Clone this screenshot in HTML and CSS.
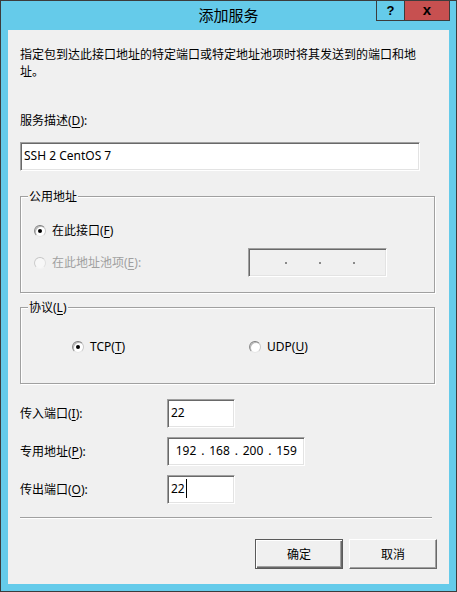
FILE: index.html
```html
<!DOCTYPE html>
<html lang="zh-CN">
<head>
<meta charset="utf-8">
<title>添加服务</title>
<link rel="stylesheet" href="styles.css">
</head>
<body>
<div class="window">
  <div class="titlebar">
    <div></div>
    <div class="title">添加服务</div>
    <div class="caption-btns">
      <div class="cbtn help">?</div>
      <div class="cbtn close">x</div>
    </div>
  </div>
  <div class="client">
    <p class="desc">指定包到达此接口地址的特定端口或特定地址池项时将其发送到的端口和地址。</p>
    <div class="label desc-label">服务描述(<u>D</u>):</div>
    <div class="textbox wide">SSH 2 CentOS 7</div>

    <div class="group g1">
      <span class="legend">公用地址</span>
      <div class="row1">
        <div class="radio-item"><span class="radio checked"></span><span>在此接口(<u>F</u>)</span></div>
      </div>
      <div class="pool-row">
        <div class="radio-item disabled"><span class="radio"></span><span>在此地址池项(<u>E</u>):</span></div>
        <div class="textbox ipbox-disabled">
          <div class="ipdots"><i></i><i></i><i></i></div>
        </div>
      </div>
    </div>

    <div class="group g2">
      <span class="legend">协议(<u>L</u>)</span>
      <div class="proto-row">
        <div class="radio-item"><span class="radio checked"></span><span>TCP(<u>T</u>)</span></div>
        <div class="radio-item"><span class="radio"></span><span>UDP(<u>U</u>)</span></div>
      </div>
    </div>

    <div class="fields">
      <div class="label">传入端口(<u>I</u>):</div>
      <div class="textbox small">22</div>
      <div class="label">专用地址(<u>P</u>):</div>
      <div class="textbox ipbox">
        <span class="oct">192</span><span class="dot">.</span><span class="oct">168</span><span class="dot">.</span><span class="oct">200</span><span class="dot">.</span><span class="oct">159</span>
      </div>
      <div class="label">传出端口(<u>O</u>):</div>
      <div class="textbox small"><span>22</span><span class="caret"></span></div>
    </div>

    <div class="sep"></div>

    <div class="buttons">
      <div class="btn default">确定</div>
      <div class="btn">取消</div>
    </div>
  </div>
</div>
</body>
</html>
```

FILE: styles.css
```css
* { box-sizing: border-box; }
html, body { margin: 0; padding: 0; }
body {
  font-family: "Noto Sans", "Noto Sans CJK SC", sans-serif;
  font-size: 12px;
  color: #000;
  background: #65cbea;
}
u { text-underline-offset: 2px; }

.window {
  width: 457px;
  height: 592px;
  background: #65cbea;
  border: 1px solid #3c3c3c;
  display: flex;
  flex-direction: column;
}

.titlebar {
  height: 29px;
  display: grid;
  grid-template-columns: 1fr auto 1fr;
  align-items: start;
}
.title {
  font-family: "Noto Sans CJK SC", sans-serif;
  font-size: 15px;
  line-height: 28px;
  color: #000;
}
.caption-btns {
  justify-self: end;
  display: flex;
  margin-top: -1px;
  margin-right: 6px;
}
.cbtn {
  height: 21px;
  border: 1px solid #3c3c3c;
  display: flex;
  align-items: center;
  justify-content: center;
  font-family: "Liberation Sans", sans-serif;
  font-weight: bold;
  color: #000;
}
.help {
  width: 28px;
  border-right: none;
  background: #65cbea;
  font-size: 13px;
}
.close {
  width: 46px;
  background: #c75050;
  font-size: 15px;
  line-height: 1;
  padding-bottom: 2px;
}

.client {
  flex: 1;
  margin: 0 7px 7px;
  background: #f0f0f0;
  padding: 16px 12px 0;
  display: flex;
  flex-direction: column;
}

.desc {
  margin: 0;
  width: 400px;
  line-height: 17px;
}
.label { line-height: 17px; }
.desc-label { margin-top: 32px; }

.textbox {
  background: #fff;
  border: 1px solid;
  border-color: #a0a0a0 #fff #fff #a0a0a0;
  box-shadow: inset 1px 1px 0 #696969, inset -1px -1px 0 #e3e3e3;
  height: 29px;
  line-height: 17px;
  padding: 4px 3px 0 3px;
}
.wide { margin-top: 13px; width: 400px; }

.group {
  position: relative;
  margin-right: 2px;
  border: 1px solid #a0a0a0;
  box-shadow: 1px 1px 0 #fff, inset 1px 1px 0 #fff;
}
.legend {
  position: absolute;
  top: -9px;
  left: 7px;
  padding: 0 1px;
  background: #f0f0f0;
  line-height: 17px;
}
.g1 {
  margin-top: 25px;
  height: 97px;
  padding: 25px 0 15px 13px;
}
.g2 {
  margin-top: 14px;
  height: 77px;
  padding: 30px 0 28px 51px;
}

.row1 { display: flex; align-items: center; height: 17px; }
.pool-row {
  margin-top: 9px;
  display: grid;
  grid-template-columns: 214px auto;
  align-items: center;
  height: 29px;
}
.proto-row {
  display: grid;
  grid-template-columns: 177px auto;
  align-items: center;
  height: 17px;
}

.radio-item {
  display: flex;
  align-items: center;
  gap: 6px;
  line-height: 17px;
}
.radio-item.disabled { color: #a0a0a0; }
.radio {
  width: 12px;
  height: 12px;
  border-radius: 50%;
  border: 1px solid;
  border-color: #7d7d7d #c8c8c8 #e6e6e6 #8a8a8a;
  background: #fff;
  box-shadow: inset 1px 1px 0 #b8b8b8;
  display: flex;
  align-items: center;
  justify-content: center;
}
.radio.checked::after {
  content: "";
  width: 4px;
  height: 4px;
  border-radius: 50%;
  background: #000;
}
.disabled .radio {
  border-color: #c4c4c4 #e0e0e0 #f4f4f4 #cccccc;
  background: #f7f7f7;
  box-shadow: none;
}

.ipbox-disabled {
  width: 139px;
  background: #f0f0f0;
  padding: 0;
  display: flex;
  align-items: center;
}
.ipdots {
  display: flex;
  align-items: center;
  gap: 32px;
  padding-left: 36px;
}
.ipdots i {
  display: block;
  width: 2px;
  height: 2px;
  background: #8a8a8a;
}

.fields {
  margin-top: 15px;
  display: grid;
  grid-template-columns: 147px auto;
  row-gap: 9px;
  align-items: center;
}
.fields .textbox { justify-self: start; }
.small {
  width: 68px;
  display: flex;
  align-items: flex-start;
}
.caret {
  width: 1px;
  height: 19px;
  margin-top: -1px;
  margin-left: 1px;
  background: #000;
}
.ipbox {
  width: 138px;
  display: flex;
  padding: 4px 0 0 6px;
}
.oct { width: 24px; text-align: center; }
.dot { width: 9.5px; text-align: center; }

.sep {
  margin-top: 13px;
  margin-right: 5px;
  border-top: 1px solid #a0a0a0;
  border-bottom: 1px solid #fff;
}

.buttons {
  margin-top: 20px;
  display: flex;
  justify-content: flex-end;
  gap: 6px;
}
.btn {
  width: 88px;
  height: 30px;
  background: #f0f0f0;
  border: 1px solid;
  border-color: #fff #696969 #696969 #fff;
  box-shadow: inset -1px -1px 0 #a0a0a0;
  display: flex;
  align-items: center;
  justify-content: center;
  line-height: 17px;
}
.btn.default {
  border: 1px solid #5a5a5a;
  box-shadow: inset 1px 1px 0 #fff, inset -1px -1px 0 #696969, inset -2px -2px 0 #a0a0a0;
}
```
